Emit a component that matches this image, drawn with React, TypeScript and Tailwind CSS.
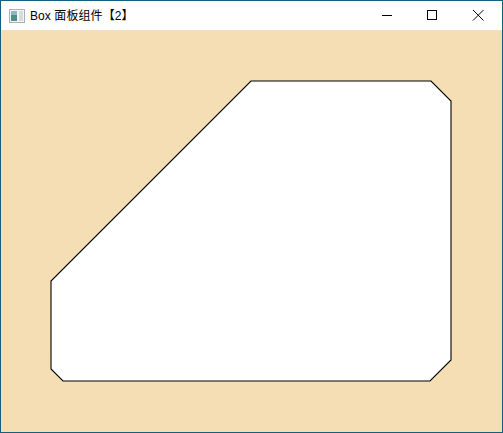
export default function App() {
  return (
    <div className="flex h-[433px] w-[503px] flex-col overflow-hidden border border-[#14607c] bg-white" style={{ fontFamily: '"Noto Sans CJK SC", "Liberation Sans", sans-serif' }}>
      <div className="flex h-[29px] shrink-0 items-center bg-white">
        <svg width="16" height="16" viewBox="0 0 16 16" className="ml-[8px] shrink-0">
          <rect x="0.5" y="1.5" width="15" height="13" fill="#f4f6f6" stroke="#a9b1b4" />
          <rect x="2" y="3" width="6" height="10" fill="#4f8f8a" />
          <rect x="2" y="3" width="6" height="4" fill="#8fb4c4" />
          <rect x="10" y="3" width="4" height="10" fill="#d5dcde" />
        </svg>
        <span className="ml-[5px] mt-[1px] whitespace-nowrap text-[12px] leading-none tracking-[0.08px] text-black" style={{ fontFamily: '"Liberation Sans", "Noto Sans CJK SC", sans-serif' }}>
          Box 面板组件【2】
        </span>
        <div className="ml-auto flex h-full items-center">
          <svg width="46" height="29" viewBox="0 0 46 29"><path d="M18 14.5H28" stroke="#000" strokeWidth="1" /></svg>
          <svg width="46" height="29" viewBox="0 0 46 29"><rect x="17.5" y="9.5" width="9" height="9" fill="none" stroke="#000" strokeWidth="1" /></svg>
          <svg width="46" height="29" viewBox="0 0 46 29"><path d="M17 9L27.5 19.5M27.5 9L17 19.5" stroke="#000" strokeWidth="1" /></svg>
        </div>
      </div>
      <div className="min-h-0 flex-1 bg-[#f5deb3]">
        <svg width="501" height="402" viewBox="0 0 501 402" className="block">
          <polygon
            points="250,51 430,51 450,71 450,330 429,351 62,351 50,339 50,251"
            fill="#fff"
            stroke="#000"
            strokeWidth="1.1"
          />
        </svg>
      </div>
    </div>
  );
}
